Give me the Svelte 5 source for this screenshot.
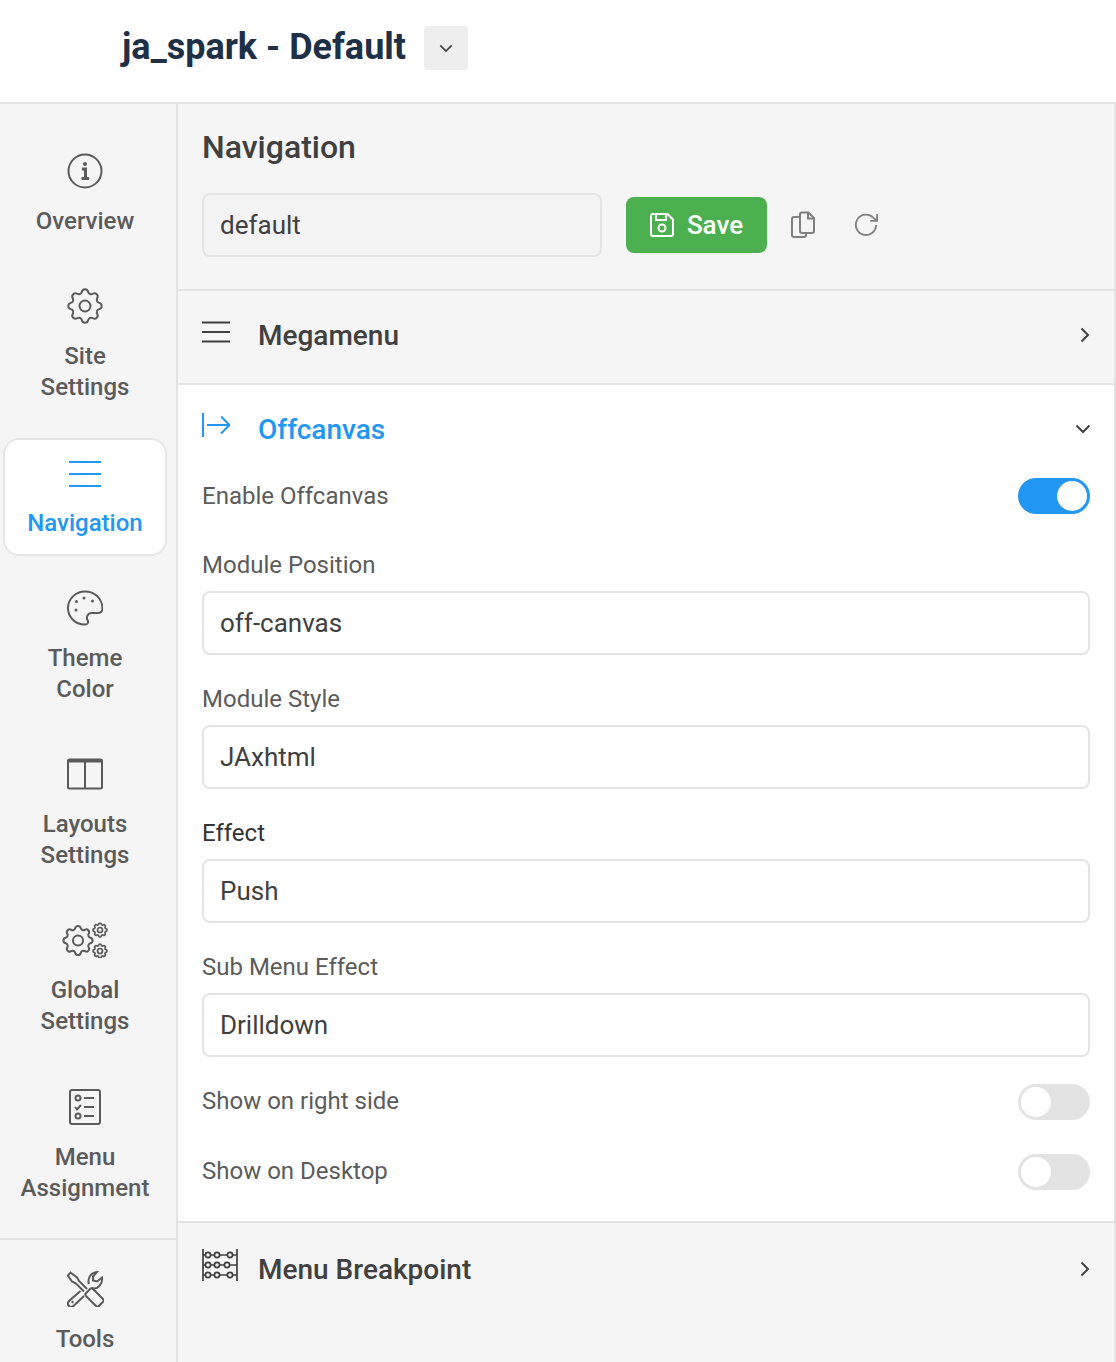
<script>
  const menu = [
    { id: "info", label: ["Overview"] },
    { id: "gear", label: ["Site", "Settings"] },
    { id: "nav", label: ["Navigation"], active: true },
    { id: "palette", label: ["Theme", "Color"] },
    { id: "layout", label: ["Layouts", "Settings"] },
    { id: "gears", label: ["Global", "Settings"] },
    { id: "list", label: ["Menu", "Assignment"] }
  ];
  const gearPath =
    "M10.325 4.317c.426-1.756 2.924-1.756 3.350 0a1.724 1.724 0 0 0 2.573 1.066c1.543-.94 3.310.826 2.370 2.370a1.724 1.724 0 0 0 1.065 2.572c1.756.426 1.756 2.924 0 3.350a1.724 1.724 0 0 0-1.066 2.573c.94 1.543-.826 3.310-2.370 2.370a1.724 1.724 0 0 0-2.572 1.065c-.426 1.756-2.924 1.756-3.350 0a1.724 1.724 0 0 0-2.573-1.066c-1.543.94-3.310-.826-2.370-2.370a1.724 1.724 0 0 0-1.065-2.572c-1.756-.426-1.756-2.924 0-3.350a1.724 1.724 0 0 0 1.066-2.573c-.94-1.543.826-3.310 2.370-2.370 1 .608 2.296.07 2.572-1.065z";
  const gearAt = (x, y, s) => `translate(${x} ${y}) scale(${s}) translate(-12 -12)`;
</script>

{#snippet icon(id)}
  {#if id === "info"}
    <svg viewBox="0 0 36 36" width="36" height="36"><circle cx="18" cy="18" r="16.500" /><path class="thick" d="M15 16h3.500v9M14.500 25.500h7.500" /><circle class="dot" cx="18" cy="11" r="2" /></svg>
  {:else if id === "gear"}
    <svg viewBox="0 0 36 36" width="36" height="36"><path class="keep" transform={gearAt(18, 18, 1.85)} d={gearPath} /><circle cx="18" cy="18" r="5.500" /></svg>
  {:else if id === "nav"}
    <svg viewBox="0 0 32 28" width="32" height="28"><path d="M0 2h32M0 14h32M0 26h32" /></svg>
  {:else if id === "palette"}
    <svg viewBox="0 0 36 36" width="36" height="36">
      <path d="M18 1.500C8.500 1.500 1 9 1 18c0 8.500 6.500 16.500 17 16.500 3.500 0 3.500-2.500 2.500-4.500-1.200-2.400-.5-6.500 3.500-7 1.500-.2 4.500 0 7 0 3 0 4.500-2 4.500-5C35 8 27.500 1.500 18 1.500z" />
      <circle class="dot" cx="9" cy="20" r="1.500" /><circle class="dot" cx="9.500" cy="11.500" r="1.500" /><circle class="dot" cx="17" cy="8" r="1.500" /><circle class="dot" cx="25.500" cy="11" r="1.500" />
    </svg>
  {:else if id === "layout"}
    <svg viewBox="0 0 36 32" width="36" height="32"><rect x="1" y="1.500" width="34" height="29" rx="1.500" /><path d="M18 2v28" /><path class="thick" d="M1 3h34" /></svg>
  {:else if id === "gears"}
    <svg viewBox="0 0 46 36" width="46" height="36">
      <path class="keep" transform={gearAt(16, 18.5, 1.62)} d={gearPath} /><circle cx="16" cy="18.500" r="5" />
      <path class="keep small" transform={gearAt(38, 8, 0.78)} d={gearPath} /><circle class="small" cx="38" cy="8" r="2.500" />
      <path class="keep small" transform={gearAt(38, 29, 0.78)} d={gearPath} /><circle class="small" cx="38" cy="29" r="2.500" />
    </svg>
  {:else if id === "list"}
    <svg viewBox="0 0 32 36" width="32" height="36">
      <rect x="1" y="1" width="30" height="34" rx="2" />
      <circle cx="9" cy="9" r="2.500" /><circle cx="9" cy="27" r="2.500" />
      <path d="M15 9h10M15 18h10M15 27h10M6 18l2 2.500 4-4.500" />
    </svg>
  {:else if id === "tools"}
    <svg viewBox="0 0 37 36" width="37" height="36">
      <path d="M26 18 36 28c.8.8.8 2 0 2.800l-4.200 4.200c-.8.8-2 .8-2.800 0L19 25c-.8-.8-.8-2 0-2.800L23 18c.8-.8 2.200-.8 3 0z" />
      <path d="M20 18 12 10 10 6.500 3.500 1.500.8 4.500 5 10.500 9 12.500 17 20.500" />
      <path d="M22 13c-1.800-5 1.500-11.500 8-12l-4 4.500v4l4 1 5-4c1 6.500-4.500 12.500-10.500 10.500" />
      <path d="M13.500 20 2.500 29.500c-2 2-2 4-.5 5.500s3.500 1 5-.5L17 25" />
      <circle class="dot" cx="5.500" cy="31" r="1.200" />
    </svg>
  {/if}
{/snippet}

{#snippet chevronRight()}
  <svg class="chev" viewBox="0 0 10 16" width="10" height="16"><path d="M1.500 1.500 8 8l-6.500 6.500" /></svg>
{/snippet}

{#snippet field(label, value, dark = false)}
  <div class="field">
    <span class="label" class:dark>{label}</span>
    <div class="input">{value}</div>
  </div>
{/snippet}

{#snippet toggle(label, on = false)}
  <div class="toggle-row">
    <span class="label">{label}</span>
    <span class="switch" class:on><span class="knob"></span></span>
  </div>
{/snippet}

<div class="page">
  <header class="topbar">
    <h1>ja_spark - Default</h1>
    <button class="drop" aria-label="Switch style">
      <svg viewBox="0 0 16 10" width="14" height="9"><path d="M1.500 1.500 8 8l6.500-6.500" /></svg>
    </button>
  </header>

  <div class="body">
    <aside class="sidebar">
      <nav class="items">
        {#each menu as item}
          <div class="item" class:active={item.active}>
            <span class="ico">{@render icon(item.id)}</span>
            <span class="text">
              {#each item.label as line}<span>{line}</span>{/each}
            </span>
          </div>
        {/each}
      </nav>
      <div class="tools">
        <div class="item">
          <span class="ico">{@render icon("tools")}</span>
          <span class="text"><span>Tools</span></span>
        </div>
      </div>
    </aside>

    <main class="main">
      <section class="head">
        <h2>Navigation</h2>
        <div class="actions">
          <div class="input name">default</div>
          <button class="save">
            <svg viewBox="0 0 24 24" width="24" height="24"><path d="M2.500 1h15L23 6.500V21a2 2 0 0 1-2 2H3a2 2 0 0 1-2-2V3a2 2 0 0 1 1.500-2z" /><path d="M6 1.500V7h10V1.500" /><circle cx="12" cy="15" r="3.500" /></svg>
            Save
          </button>
          <button class="tool" aria-label="Copy">
            <svg viewBox="0 0 24 28" width="24" height="28"><path d="M9 3.500A2 2 0 0 1 11 1.500h6.500L23 7v13a2 2 0 0 1-2 2H11a2 2 0 0 1-2-2z" /><path d="M17 2v5.500h6" /><path d="M9 6H3a2 2 0 0 0-2 2v16a2 2 0 0 0 2 2h10a2 2 0 0 0 2-2v-2" /></svg>
          </button>
          <button class="tool" aria-label="Reset">
            <svg viewBox="0 0 26 26" width="26" height="26"><path d="M24 13a11 11 0 1 1-3.200-8L25 8.500M25 1v7.500h-7.500" /></svg>
          </button>
        </div>
      </section>

      <section class="row">
        <svg class="row-ico" viewBox="0 0 28 22" width="28" height="22"><path d="M0 1.500h28M0 11h28M0 20.500h28" /></svg>
        <h3>Megamenu</h3>
        {@render chevronRight()}
      </section>

      <section class="panel">
        <div class="panel-head">
          <svg class="row-ico" viewBox="0 0 28 24" width="28" height="24"><path d="M1 0v24M5 12h22M19 3.500l8.500 8.500-8.500 8.500" /></svg>
          <h3>Offcanvas</h3>
          <svg class="chev down" viewBox="0 0 16 10" width="16" height="10"><path d="M1.500 1.500 8 8l6.500-6.500" /></svg>
        </div>
        {@render toggle("Enable Offcanvas", true)}
        {@render field("Module Position", "off-canvas")}
        {@render field("Module Style", "JAxhtml")}
        {@render field("Effect", "Push", true)}
        {@render field("Sub Menu Effect", "Drilldown")}
        {@render toggle("Show on right side")}
        {@render toggle("Show on Desktop")}
      </section>

      <section class="row last">
        <svg class="row-ico abacus" viewBox="0 0 36 32" width="36" height="32">
          <path d="M1 0v32M35 0v32M1 6h34M1 16h34M1 26h34" />
          <g class="beads"><circle cx="6" cy="6" r="2.600" /><circle cx="15" cy="6" r="2.600" /><circle cx="28" cy="6" r="2.600" /><circle cx="6" cy="16" r="2.600" /><circle cx="15" cy="16" r="2.600" /><circle cx="25" cy="16" r="2.600" /><circle cx="6" cy="26" r="2.600" /><circle cx="15" cy="26" r="2.600" /><circle cx="28" cy="26" r="2.600" /></g>
        </svg>
        <h3>Menu Breakpoint</h3>
        {@render chevronRight()}
      </section>
    </main>
  </div>
</div>

<style>
  :global(body) {
    margin: 0;
    background: #fff;
    font-family: Roboto, "Liberation Sans", sans-serif;
  }

  .page {
    height: 1362px;
    display: flex;
    flex-direction: column;
    overflow: hidden;
  }

  svg {
    fill: none;
    stroke: currentColor;
    stroke-width: 2;
    display: block;
  }
  svg .dot {
    fill: currentColor;
    stroke: none;
  }
  svg .thick {
    stroke-width: 3;
  }
  svg .keep {
    vector-effect: non-scaling-stroke;
  }
  svg .small {
    stroke-width: 1.7;
  }

  .topbar {
    height: 102px;
    flex: none;
    box-sizing: border-box;
    display: flex;
    align-items: center;
    padding: 0 0 6px 122px;
  }
  h1 {
    margin: 0 0 2px;
    font-size: 36px;
    font-weight: 700;
    color: #1d3048;
  }
  .drop {
    width: 44px;
    height: 44px;
    margin-left: 18px;
    border: 0;
    border-radius: 4px;
    background: #eeeeee;
    color: #444;
    display: flex;
    align-items: center;
    justify-content: center;
    padding: 0;
  }

  .body {
    flex: 1;
    display: flex;
    min-height: 0;
    border-top: 2px solid #e3e3e3;
    border-right: 2px solid #e3e3e3;
  }

  .sidebar {
    width: 176px;
    flex: none;
    background: #f5f5f5;
    border-right: 2px solid #e3e3e3;
  }
  .items {
    padding: 31px 9px 18px 3px;
    display: flex;
    flex-direction: column;
    gap: 17.3px;
  }
  .item {
    box-sizing: border-box;
    padding: 16px 0 14px;
    display: flex;
    flex-direction: column;
    align-items: center;
    color: #5b5b5b;
    border: 2px solid transparent;
    border-radius: 16px;
  }
  .item.active {
    margin: 1px 0 -1px;
    background: #fff;
    border-color: #e6e6e6;
    color: #2196f3;
  }
  .item.active .text {
    margin-top: -1px;
  }
  .item.active .ico + .text {
    padding-bottom: 1px;
  }
  .ico {
    height: 36px;
    display: flex;
    align-items: center;
    justify-content: center;
    margin-bottom: 17px;
  }
  .text {
    display: flex;
    flex-direction: column;
    align-items: center;
    font-size: 24px;
    font-weight: 500;
    line-height: 31px;
    white-space: nowrap;
  }
  .tools {
    border-top: 2px solid #e3e3e3;
    padding: 13px 9px 0 3px;
  }

  .main {
    flex: 1;
    min-width: 0;
    background: #f5f5f5;
    display: flex;
    flex-direction: column;
  }

  .head {
    height: 187px;
    box-sizing: border-box;
    padding: 24px 24px 0;
    border-bottom: 2px solid #e3e3e3;
  }
  h2 {
    margin: 0 0 27px;
    font-size: 32px;
    line-height: 38px;
    font-weight: 500;
    color: #404040;
  }
  .actions {
    display: flex;
    align-items: center;
  }
  .input {
    height: 64px;
    box-sizing: border-box;
    border: 2px solid #e3e3e3;
    border-radius: 8px;
    padding: 0 16px;
    display: flex;
    align-items: center;
    font-size: 26px;
    color: #404040;
    background: #fff;
  }
  .name {
    width: 400px;
    background: #f3f3f3;
  }
  .save {
    margin-left: 24px;
    width: 141px;
    height: 56px;
    border: 0;
    border-radius: 8px;
    background: #4caf50;
    color: #fff;
    font: 500 26px Roboto, "Liberation Sans", sans-serif;
    display: flex;
    align-items: center;
    justify-content: center;
    gap: 13px;
    padding: 0;
  }
  .tool {
    background: none;
    border: 0;
    color: #808080;
    padding: 0;
    margin-left: 24px;
    width: 24px;
    display: flex;
    justify-content: center;
  }
  .tool + .tool {
    margin-left: 39px;
  }

  .row {
    height: 94px;
    box-sizing: border-box;
    padding: 0 24px;
    display: flex;
    align-items: center;
    border-bottom: 2px solid #e3e3e3;
    color: #404040;
  }
  .row.last {
    flex: 1;
    align-items: flex-start;
    padding-top: 31px;
    border-top: 2px solid #e3e3e3;
    border-bottom: 0;
  }
  .row-ico {
    flex: none;
    width: 28px;
    margin: 0 28px 10px 0;
  }
  .abacus {
    width: 36px;
    margin: -5px 20px 0 0;
    stroke-width: 1.7;
  }
  .beads circle {
    fill: #f5f5f5;
  }
  h3 {
    margin: 0 0 2px;
    flex: 1;
    font-size: 28px;
    line-height: 32px;
    font-weight: 500;
  }
  .chev {
    flex: none;
    color: #404040;
    margin-bottom: 4px;
  }
  .row.last .chev {
    margin: 7px 0 0;
  }

  .panel {
    background: #fff;
    padding: 0 24px 15px;
    display: flex;
    flex-direction: column;
  }
  .panel-head {
    height: 76px;
    box-sizing: border-box;
    padding-top: 13px;
    display: flex;
    align-items: center;
    color: #2196f3;
  }
  .panel-head h3 {
    margin: 0;
  }
  .panel-head .down {
    color: #404040;
    margin: 0 -1px 2px 0;
  }

  .toggle-row {
    height: 70px;
    flex: none;
    display: flex;
    align-items: center;
    justify-content: space-between;
  }
  .label {
    font-size: 24px;
    line-height: 30px;
    color: #5b5b5b;
  }
  .label.dark {
    color: #333;
  }
  .switch {
    width: 72px;
    height: 36px;
    border-radius: 18px;
    background: #e3e3e3;
    display: flex;
    align-items: center;
    padding: 3px;
    box-sizing: border-box;
    margin-top: 2px;
  }
  .switch.on {
    margin-top: 0;
    background: #2196f3;
    justify-content: flex-end;
  }
  .knob {
    width: 30px;
    height: 30px;
    border-radius: 50%;
    background: #fff;
  }
  .field {
    display: flex;
    flex-direction: column;
    gap: 11px;
  }
  .field + .field {
    margin-top: 29px;
  }
  .toggle-row + .field {
    margin-top: 19px;
  }
  .field + .toggle-row {
    margin-top: 9px;
  }
</style>
